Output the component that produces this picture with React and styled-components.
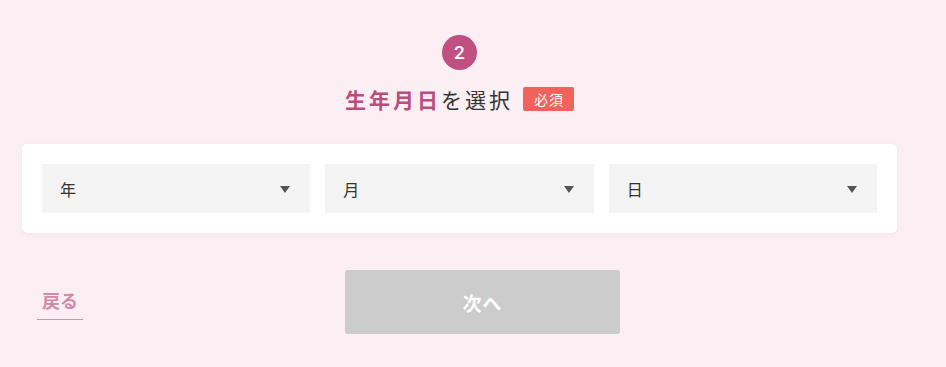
import React from "react";
import styled, { createGlobalStyle } from "styled-components";

const GlobalStyle = createGlobalStyle`
  html, body {
    margin: 0;
    padding: 0;
    background-color: #fbeff3;
    font-family: "Noto Sans CJK JP", "Noto Sans", sans-serif;
  }
`;

const Page = styled.div`
  width: 875px;
  margin-left: 22px;
  padding-top: 35px;
  min-height: 332px;
`;

const Header = styled.div`
  display: flex;
  flex-direction: column;
  align-items: center;
`;

const StepBadge = styled.div`
  width: 35px;
  height: 35px;
  border-radius: 50%;
  background-color: #c0507f;
  color: #fff;
  font-family: Roboto, "Noto Sans", sans-serif;
  font-size: 19px;
  font-weight: 500;
  display: flex;
  align-items: center;
  justify-content: center;
`;

const Title = styled.h2`
  margin: 14px 0 0;
  display: flex;
  align-items: center;
  font-size: 21px;
  font-weight: 400;
  color: #333;
  letter-spacing: 3px;
  line-height: 30px;
`;

const Strong = styled.span`
  color: #b94d7c;
  font-weight: 700;
`;

const Required = styled.span`
  margin-left: 10px;
  background-color: #f0625b;
  color: #fff;
  font-size: 14px;
  letter-spacing: 1px;
  font-weight: 400;
  padding: 0 10px 0 11px;
  height: 24px;
  line-height: 24px;
  border-radius: 2px;
`;

const Card = styled.div`
  margin-top: 30px;
  background-color: #fff;
  border-radius: 5px;
  padding: 20px;
  display: grid;
  grid-template-columns: repeat(3, 1fr);
  gap: 15px;
  box-shadow: 0 1px 3px rgba(190, 150, 170, 0.15);
`;

const Select = styled.div`
  height: 49px;
  background-color: #f4f4f4;
  display: flex;
  align-items: center;
  justify-content: space-between;
  padding: 0 20px 0 18px;
  font-size: 16px;
  color: #333;
`;

const Caret = styled.span`
  width: 0;
  height: 0;
  border-left: 5px solid transparent;
  border-right: 5px solid transparent;
  border-top: 7px solid #555;
  margin-top: 2px;
`;

const Footer = styled.div`
  margin-top: 37px;
  display: grid;
  grid-template-columns: 323px 275px;
  align-items: center;
`;

const BackLink = styled.a`
  justify-self: start;
  margin-left: 15px;
  margin-top: 2px;
  padding: 0 5px 6px;
  border-bottom: 1px solid #d690ae;
  color: #d08aa8;
  font-size: 18px;
  font-weight: 700;
  text-decoration: none;
`;

const NextButton = styled.button`
  height: 64px;
  border: none;
  border-radius: 3px;
  background-color: #cccccc;
  color: #fff;
  font-family: "Noto Sans CJK JP", "Noto Sans", sans-serif;
  font-size: 19px;
  font-weight: 700;
  letter-spacing: 1px;
`;

export default function App() {
  return (
    <>
      <GlobalStyle />
      <Page>
        <Header>
          <StepBadge>2</StepBadge>
          <Title>
            <Strong>生年月日</Strong>を選択
            <Required>必須</Required>
          </Title>
        </Header>
        <Card>
          {["年", "月", "日"].map((label) => (
            <Select key={label}>
              {label}
              <Caret />
            </Select>
          ))}
        </Card>
        <Footer>
          <BackLink href="#">戻る</BackLink>
          <NextButton>次へ</NextButton>
        </Footer>
      </Page>
    </>
  );
}
